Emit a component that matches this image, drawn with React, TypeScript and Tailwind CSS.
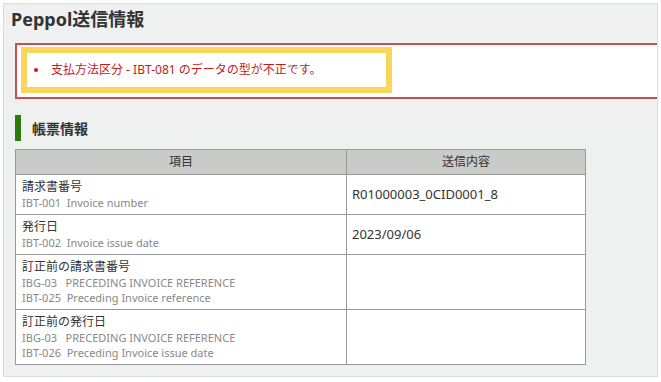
import React from 'react';

const font = { fontFamily: '"Noto Sans", "Noto Sans CJK JP", sans-serif' };

interface Row {
  name: string;
  subs: string[];
  value?: string;
}

const rows: Row[] = [
  { name: '請求書番号', subs: ['IBT-001\u00a0\u00a0Invoice number'], value: 'R01000003_0CID0001_8' },
  { name: '発行日', subs: ['IBT-002\u00a0\u00a0Invoice issue date'], value: '2023/09/06' },
  {
    name: '訂正前の請求書番号',
    subs: ['IBG-03\u00a0\u00a0\u00a0PRECEDING INVOICE REFERENCE', 'IBT-025\u00a0\u00a0Preceding Invoice reference'],
  },
  {
    name: '訂正前の発行日',
    subs: ['IBG-03\u00a0\u00a0\u00a0PRECEDING INVOICE REFERENCE', 'IBT-026\u00a0\u00a0Preceding Invoice issue date'],
  },
];

const App: React.FC = () => {
  return (
    <div className="w-[661px] h-[382px] bg-white p-[3px]" style={font}>
      <div className="w-[655px] h-[374px] border border-[#dcdcdc] bg-[#eff0f0] overflow-hidden">
        <h1 className="pl-[7px] pt-[2px] h-[39px] text-[18px] leading-[26px] font-bold text-[#333]">Peppol送信情報</h1>

        {/* error box */}
        <div className="ml-[11px] h-[56px] border-y-2 border-l-2 border-[#c9504f] bg-white pt-[2px] pl-[4px]">
          <div className="w-[371px] h-[46px] border-[6px] border-[#f8d65c] flex items-center pl-[7px]">
            <span className="w-[4px] h-[4px] rounded-full bg-[#c41a1a]" />
            <span className="ml-[13px] text-[12px] text-[#c41a1a]">支払方法区分 - IBT-081 のデータの型が不正です。</span>
          </div>
        </div>

        {/* section heading */}
        <div className="mt-[16px] ml-[11px] flex items-center h-[26px]">
          <div className="w-[6px] h-[26px] bg-[#2b7a0b]" />
          <h2 className="ml-[11px] text-[14px] font-bold text-[#333]">帳票情報</h2>
        </div>

        <table className="mt-[8px] ml-[11px] w-[571px] border-collapse text-[#333]">
          <thead>
            <tr className="h-[25px] bg-[#c8cbc7]">
              <th className="w-[331px] border border-[#999] text-[12px] font-normal">項目</th>
              <th className="border border-[#999] text-[12px] font-normal">送信内容</th>
            </tr>
          </thead>
          <tbody>
            {rows.map((r) => (
              <tr key={r.name} className={r.subs.length > 1 ? 'bg-white h-[55px]' : 'bg-white h-[40px]'}>
                <td className="border border-[#999] pl-[6px] pt-[4px] pb-0 align-top">
                  <div className="text-[12px] leading-[16px]">{r.name}</div>
                  {r.subs.map((s) => (
                    <div key={s} className="text-[11px] leading-[15px] text-[#888]">{s}</div>
                  ))}
                </td>
                <td className="border border-[#999] pl-[5px] text-[13px]">{r.value}</td>
              </tr>
            ))}
          </tbody>
        </table>
      </div>
    </div>
  );
};

export default App;
